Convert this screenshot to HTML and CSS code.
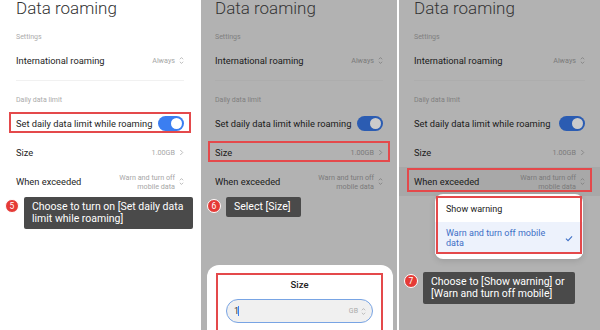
FILE: index.html
```html
<!DOCTYPE html>
<html>
<head>
<meta charset="utf-8">
<link rel="stylesheet" href="styles.css">
</head>
<body>
<div class="stage">
  <section class="panel p1">
    <h1 class="title">Data roaming</h1>
    <div class="label">Settings</div>
    <div class="row"><span class="name">International roaming</span><span class="val">Always<svg class="icon" viewBox="0 0 6 10"><path d="M1 3.5L3 1.5L5 3.5M1 6.5L3 8.5L5 6.5"/></svg></span></div>
    <div class="divider"></div>
    <div class="label">Daily data limit</div>
    <div class="row hl"><span class="name">Set daily data limit while roaming</span><span class="toggle"></span></div>
    <div class="row"><span class="name">Size</span><span class="val">1.00GB<svg class="icon" viewBox="0 0 6 10"><path d="M1.5 2L4.5 5L1.5 8"/></svg></span></div>
    <div class="row"><span class="name">When exceeded</span><span class="val"><span class="multi">Warn and turn off<br>mobile data</span><svg class="icon" viewBox="0 0 6 10"><path d="M1 3.5L3 1.5L5 3.5M1 6.5L3 8.5L5 6.5"/></svg></span></div>
    <div class="hint h5"><span class="badge">5</span><div class="tip">Choose to turn on [Set daily data<br>limit while roaming]</div></div>
  </section>

  <section class="panel p2 dim">
    <h1 class="title">Data roaming</h1>
    <div class="label">Settings</div>
    <div class="row"><span class="name">International roaming</span><span class="val">Always<svg class="icon" viewBox="0 0 6 10"><path d="M1 3.5L3 1.5L5 3.5M1 6.5L3 8.5L5 6.5"/></svg></span></div>
    <div class="divider"></div>
    <div class="label">Daily data limit</div>
    <div class="row"><span class="name">Set daily data limit while roaming</span><span class="toggle"></span></div>
    <div class="row hl"><span class="name">Size</span><span class="val">1.00GB<svg class="icon" viewBox="0 0 6 10"><path d="M1.5 2L4.5 5L1.5 8"/></svg></span></div>
    <div class="row"><span class="name">When exceeded</span><span class="val"><span class="multi">Warn and turn off<br>mobile data</span><svg class="icon" viewBox="0 0 6 10"><path d="M1 3.5L3 1.5L5 3.5M1 6.5L3 8.5L5 6.5"/></svg></span></div>
    <div class="hint h6"><span class="badge">6</span><div class="tip">Select [Size]</div></div>
    <div class="sheet">
      <div class="sheet-frame">
        <div class="sheet-title">Size</div>
        <div class="input"><span class="num">1<span class="caret"></span></span><span class="unit">GB<svg class="icon" viewBox="0 0 6 10"><path d="M1 3.5L3 1.5L5 3.5M1 6.5L3 8.5L5 6.5"/></svg></span></div>
      </div>
    </div>
  </section>

  <section class="panel p3 dim">
    <h1 class="title">Data roaming</h1>
    <div class="label">Settings</div>
    <div class="row"><span class="name">International roaming</span><span class="val">Always<svg class="icon" viewBox="0 0 6 10"><path d="M1 3.5L3 1.5L5 3.5M1 6.5L3 8.5L5 6.5"/></svg></span></div>
    <div class="divider"></div>
    <div class="label">Daily data limit</div>
    <div class="row"><span class="name">Set daily data limit while roaming</span><span class="toggle"></span></div>
    <div class="row"><span class="name">Size</span><span class="val">1.00GB<svg class="icon" viewBox="0 0 6 10"><path d="M1.5 2L4.5 5L1.5 8"/></svg></span></div>
    <div class="row hl pressed"><span class="name">When exceeded</span><span class="val"><span class="multi">Warn and turn off<br>mobile data</span><svg class="icon" viewBox="0 0 6 10"><path d="M1 3.5L3 1.5L5 3.5M1 6.5L3 8.5L5 6.5"/></svg></span></div>
    <div class="popup">
      <div class="opt">Show warning</div>
      <div class="opt sel"><span>Warn and turn off mobile<br>data</span><svg class="check" viewBox="0 0 9 8"><path d="M1 4.2L3.4 6.5L8 1.5"/></svg></div>
    </div>
    <div class="hint h7"><span class="badge">7</span><div class="tip">Choose to [Show warning] or<br>[Warn and turn off mobile]</div></div>
  </section>
</div>
</body>
</html>
```
FILE: styles.css
```css
* { box-sizing: border-box; margin: 0; padding: 0; }
html, body { width: 600px; height: 330px; overflow: hidden; background: #fff; }
body { font-family: Roboto, "Noto Sans", sans-serif; color: #222; }

.stage { display: flex; height: 330px; }

.panel {
  position: relative;
  overflow: hidden;
  height: 330px;
  flex: none;
  --pad: 16px;
  --bg: #fff;
  --title: #333;
  --text: #1e1e1e;
  --sub: #ababab;
  --val: #a6a6a6;
  --line: #f1f1f1;
  --blue: #3b7ef1;
  --knob: #fff;
  background: var(--bg);
}
.panel.dim {
  --bg: #b2b2b2;
  --title: #353535;
  --text: #1a1a1a;
  --sub: #7f7f7f;
  --val: #7a7a7a;
  --line: #adadad;
  --blue: #2b5cb2;
  --knob: #cbcbcb;
}
.p1 { width: 200px; }
.p2 { width: 196px; margin-left: 1px; --pad: 14px; }
.p3 { width: 201px; margin-left: 2px; --pad: 15px; }

.title {
  font-size: 17px;
  font-weight: 300;
  line-height: 20px;
  margin-top: -2px;
  color: var(--title);
  padding: 0 var(--pad);
}
.label {
  font-size: 7px;
  line-height: 10px;
  color: var(--sub);
  margin: 14px 0 4px;
  padding: 0 var(--pad);
}
.row {
  position: relative;
  height: 29px;
  display: flex;
  align-items: center;
  justify-content: space-between;
  padding: 0 var(--pad);
}
.name { font-size: 9.3px; color: var(--text); }
.val {
  display: flex;
  align-items: center;
  gap: 4px;
  font-size: 7.2px;
  color: var(--val);
}
.multi { text-align: right; line-height: 9px; }
.icon { width: 5px; height: 9px; fill: none; stroke: var(--val); stroke-width: 0.9; }
.divider { height: 1px; background: var(--line); margin: 5px var(--pad) 0; }

.toggle {
  width: 26px;
  height: 15px;
  border-radius: 8px;
  background: var(--blue);
  display: flex;
  align-items: center;
  justify-content: flex-end;
  padding: 0 2px;
}
.toggle::after {
  content: "";
  width: 11px;
  height: 11px;
  border-radius: 50%;
  background: var(--knob);
}

.hl::after {
  content: "";
  position: absolute;
  left: calc(var(--pad) - 7px);
  right: calc(var(--pad) - 7px);
  top: 3px;
  bottom: 5px;
  border: 2px solid #e4494b;
}
.pressed { background: #a8a8a8; }
.pressed::after { top: 1px; bottom: 4px; }

/* hints */
.hint {
  position: absolute;
  display: flex;
  align-items: flex-start;
  gap: 5px;
}
.h5 { left: 5px; top: 197px; }
.h6 { left: 6px; top: 197px; }
.h7 { left: 5px; top: 272px; }
.badge {
  width: 14px;
  height: 14px;
  margin-top: 2px;
  border-radius: 50%;
  background: #e53a36;
  border: 1px solid #fff;
  color: #fff;
  font-size: 8.5px;
  line-height: 1;
  display: flex;
  align-items: center;
  justify-content: center;
}
.tip {
  background: #4a4a4a;
  color: #fff;
  font-size: 10.5px;
  line-height: 12px;
  padding: 4px 10px 4px 8px;
  border-radius: 2px;
  white-space: nowrap;
}

/* bottom sheet */
.sheet {
  position: absolute;
  left: 6px;
  right: 4px;
  top: 265px;
  height: 80px;
  background: #fff;
  border-radius: 12px 12px 0 0;
  padding: 8px 10px 0 9px;
}
.sheet-frame {
  height: 100%;
  border: 2px solid #e4494b;
  border-bottom: none;
  padding: 0 8px;
}
.sheet-title {
  text-align: center;
  font-size: 9.5px;
  font-weight: 500;
  line-height: 20px;
  color: #222;
}
.input {
  margin-top: 4px;
  height: 24px;
  border: 1.5px solid #78a4e4;
  border-radius: 12px;
  background: #f0f0f0;
  display: flex;
  align-items: center;
  justify-content: space-between;
  padding: 0 6px 0 7px;
}
.num { font-size: 9px; color: #333; display: flex; align-items: center; }
.caret { width: 1px; height: 10px; background: #3b7ef1; margin-left: -1px; }
.unit { display: flex; align-items: center; gap: 3px; font-size: 7px; color: #aaa; }
.unit .icon { stroke: #aaa; }

/* popup menu */
.popup {
  position: absolute;
  left: 36px;
  top: 194px;
  width: 148px;
  height: 65px;
  background: #fff;
  border-radius: 8px;
  padding-top: 2px;
  box-shadow: 0 2px 6px rgba(0, 0, 0, 0.12);
}
.popup::after {
  content: "";
  position: absolute;
  left: 1px;
  right: 1px;
  top: 2px;
  bottom: 5px;
  border: 2px solid #e4494b;
}
.opt {
  height: 26px;
  display: flex;
  align-items: center;
  justify-content: space-between;
  padding: 0 10px 0 11px;
  font-size: 9px;
  color: #222;
}
.opt.sel {
  height: 32px;
  background: #edf2fc;
  color: #3d6fc6;
  line-height: 10.5px;
}
.check { width: 8px; height: 7px; fill: none; stroke: #3d6fc6; stroke-width: 1.2; }
```
